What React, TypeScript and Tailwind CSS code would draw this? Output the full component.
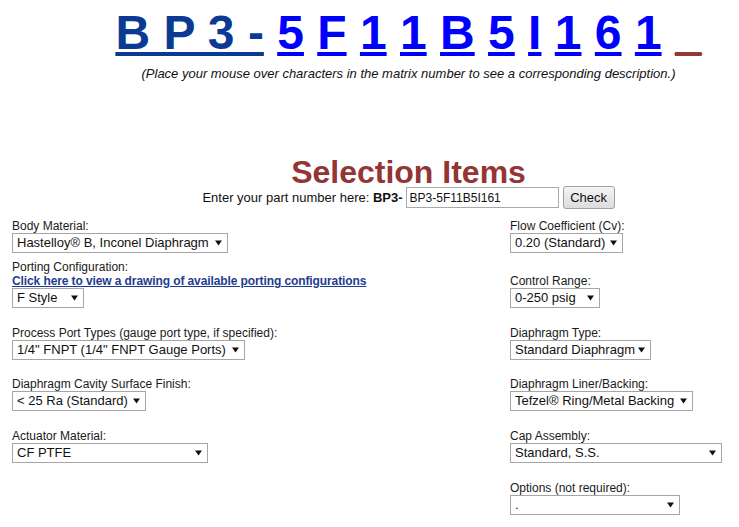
import React from "react";

const FONT = "font-['Liberation_Sans',Arial,sans-serif]";

function Arrow() {
  return (
    <svg width="7" height="6" viewBox="0 0 7 6" className="shrink-0">
      <polygon points="0,0.5 7,0.5 3.5,5.5" fill="#111" />
    </svg>
  );
}

function Sel({ text, w }: { text: string; w: string }) {
  return (
    <div
      className={`flex items-center justify-between h-[20px] border border-[#a6a6a6] bg-white pl-[4px] pr-[5px] text-[13px] leading-[18px] text-[#111] ${w}`}
    >
      <span className="whitespace-nowrap">{text}</span>
      <Arrow />
    </div>
  );
}

function Label({ children }: { children: React.ReactNode }) {
  return <div className="text-[12px] leading-[14px] text-[#1a1a1a] whitespace-nowrap">{children}</div>;
}

export default function App() {
  const chars = ["5", "F", "1", "1", "B", "5", "I", "1", "6", "1"];
  return (
    <div className={`w-full h-[527px] overflow-hidden bg-white ${FONT}`}>
      <div className="w-[817px]">
        <div className="pt-[9px] text-center text-[48px] font-bold leading-[48px] whitespace-nowrap">
          <span className="text-[#0a3a94] underline decoration-4 underline-offset-[3px]">B P 3 -</span>
          {chars.map((c, i) => (
            <React.Fragment key={i}>
              {" "}
              <span className="text-[#0000ff] underline decoration-4 underline-offset-[3px]">{c}</span>
            </React.Fragment>
          ))}{" "}
          <span className="text-[#933a32] underline decoration-4 underline-offset-[3px]">_</span>
        </div>
        <div className="mt-[9px] text-center text-[13px] leading-[15px] italic text-[#111]">
          (Place your mouse over characters in the matrix number to see a corresponding description.)
        </div>
        <div className="mt-[77px] h-[28px] text-center text-[32px] font-bold leading-[28px] text-[#933535]">
          Selection Items
        </div>
        <div className="flex justify-center items-center text-[13px] text-[#111]">
          <span className="whitespace-pre">Enter your part number here: </span>
          <span className="font-bold">BP3-</span>
          <input
            readOnly
            defaultValue="BP3-5F11B5I161"
            className="ml-[3px] w-[153px] h-[21px] border border-[#a9a9a9] px-[3px] text-[12px] text-[#111] outline-none"
          />
          <button className="ml-[4px] w-[52px] h-[23px] border border-[#a0a0a0] rounded-[3px] bg-linear-to-b from-[#f4f4f4] to-[#dcdcdc] text-[13px] text-[#111]">
            Check
          </button>
        </div>

        <div className="mt-[10px] grid grid-cols-[498px_1fr] items-end pl-[12px]">
          <div>
            <Label>Body Material:</Label>
            <Sel text="Hastelloy® B, Inconel Diaphragm" w="w-[216px]" />
          </div>
          <div>
            <Label>Flow Coefficient (Cv):</Label>
            <Sel text="0.20 (Standard)" w="w-[113px]" />
          </div>
        </div>

        <div className="mt-[7px] grid grid-cols-[498px_1fr] items-end pl-[12px]">
          <div>
            <Label>Porting Configuration:</Label>
            <a className="block text-[12px] leading-[14px] font-bold tracking-[-0.1px] text-[#1f3c8f] underline whitespace-nowrap">
              Click here to view a drawing of available porting configurations
            </a>
            <Sel text="F Style" w="w-[72px]" />
          </div>
          <div>
            <Label>Control Range:</Label>
            <Sel text="0-250 psig" w="w-[90px]" />
          </div>
        </div>

        <div className="mt-[18px] grid grid-cols-[498px_1fr] items-end pl-[12px]">
          <div>
            <Label>Process Port Types (gauge port type, if specified):</Label>
            <Sel text='1/4" FNPT (1/4" FNPT Gauge Ports)' w="w-[233px]" />
          </div>
          <div>
            <Label>Diaphragm Type:</Label>
            <Sel text="Standard Diaphragm" w="w-[141px]" />
          </div>
        </div>

        <div className="mt-[17px] grid grid-cols-[498px_1fr] items-end pl-[12px]">
          <div>
            <Label>Diaphragm Cavity Surface Finish:</Label>
            <Sel text="< 25 Ra (Standard)" w="w-[134px]" />
          </div>
          <div>
            <Label>Diaphragm Liner/Backing:</Label>
            <Sel text="Tefzel® Ring/Metal Backing" w="w-[183px]" />
          </div>
        </div>

        <div className="mt-[18px] grid grid-cols-[498px_1fr] items-end pl-[12px]">
          <div>
            <Label>Actuator Material:</Label>
            <Sel text="CF PTFE" w="w-[196px]" />
          </div>
          <div>
            <Label>Cap Assembly:</Label>
            <Sel text="Standard, S.S." w="w-[212px]" />
          </div>
        </div>

        <div className="mt-[18px] grid grid-cols-[498px_1fr] items-end pl-[12px]">
          <div />
          <div>
            <Label>Options (not required):</Label>
            <Sel text="." w="w-[170px]" />
          </div>
        </div>
      </div>
    </div>
  );
}
